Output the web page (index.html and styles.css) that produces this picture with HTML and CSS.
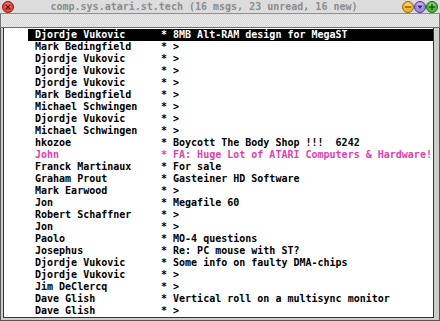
FILE: index.html
```html
<!DOCTYPE html>
<html lang="en">
<head>
    <meta charset="UTF-8">
    <title>comp.sys.atari.st.tech</title>
    <link rel="stylesheet" href="styles.css">
</head>
<body>
    <div class="window">
        <div class="titlebar">
            <svg class="btn close" width="12" height="12" viewBox="0 0 12 12">
                <circle cx="6" cy="6" r="5.5" fill="#e2463c" stroke="#8a1c14"/>
                <circle cx="6" cy="4.5" r="3" fill="#f49a8e" opacity="0.6"/>
                <path d="M3.8 3.8 L8.2 8.2 M8.2 3.8 L3.8 8.2" stroke="#6a1008" stroke-width="1.4"/>
            </svg>
            <div class="title">comp.sys.atari.st.tech (16 msgs, 23 unread, 16 new)</div>
            <div class="btns">
                <svg class="btn" width="12" height="12" viewBox="0 0 12 12">
                    <circle cx="6" cy="6" r="5.5" fill="#f0b72a" stroke="#9a6a08"/>
                    <circle cx="6" cy="4.5" r="3" fill="#fbe38a" opacity="0.6"/>
                    <path d="M3 6 H9" stroke="#7a4a00" stroke-width="1.4"/>
                </svg>
                <svg class="btn" width="12" height="12" viewBox="0 0 12 12">
                    <circle cx="6" cy="6" r="5.5" fill="#a58ae0" stroke="#4e3690"/>
                    <circle cx="6" cy="4.5" r="3" fill="#d8ccf6" opacity="0.6"/>
                    <path d="M3.2 4.6 H8.8 L6 8 Z" fill="#3c2474"/>
                </svg>
                <svg class="btn" width="12" height="12" viewBox="0 0 12 12">
                    <circle cx="6" cy="6" r="5.5" fill="#4cbc3a" stroke="#1e6a12"/>
                    <circle cx="6" cy="4.5" r="3" fill="#aee69a" opacity="0.6"/>
                    <path d="M3 6 H9 M6 3 V9" stroke="#15500a" stroke-width="1.4"/>
                </svg>
            </div>
        </div>
        <div class="infobar"></div>
        <div class="frame">
            <ul class="threads">
                <li class="sel"><div class="row"><span class="from">Djordje Vukovic</span><span>* 8MB Alt-RAM design for MegaST</span></div></li>
                <li><div class="row"><span class="from">Mark Bedingfield</span><span>* &gt;</span></div></li>
                <li><div class="row"><span class="from">Djordje Vukovic</span><span>* &gt;</span></div></li>
                <li><div class="row"><span class="from">Djordje Vukovic</span><span>* &gt;</span></div></li>
                <li><div class="row"><span class="from">Djordje Vukovic</span><span>* &gt;</span></div></li>
                <li><div class="row"><span class="from">Mark Bedingfield</span><span>* &gt;</span></div></li>
                <li><div class="row"><span class="from">Michael Schwingen</span><span>* &gt;</span></div></li>
                <li><div class="row"><span class="from">Djordje Vukovic</span><span>* &gt;</span></div></li>
                <li><div class="row"><span class="from">Michael Schwingen</span><span>* &gt;</span></div></li>
                <li><div class="row"><span class="from">hkozoe</span><span>* Boycott The Body Shop !!!  6242</span></div></li>
                <li class="hot"><div class="row"><span class="from">John</span><span>* FA: Huge Lot of ATARI Computers &amp; Hardware!</span></div></li>
                <li><div class="row"><span class="from">Franck Martinaux</span><span>* For sale</span></div></li>
                <li><div class="row"><span class="from">Graham Prout</span><span>* Gasteiner HD Software</span></div></li>
                <li><div class="row"><span class="from">Mark Earwood</span><span>* &gt;</span></div></li>
                <li><div class="row"><span class="from">Jon</span><span>* Megafile 60</span></div></li>
                <li><div class="row"><span class="from">Robert Schaffner</span><span>* &gt;</span></div></li>
                <li><div class="row"><span class="from">Jon</span><span>* &gt;</span></div></li>
                <li><div class="row"><span class="from">Paolo</span><span>* MO-4 questions</span></div></li>
                <li><div class="row"><span class="from">Josephus</span><span>* Re: PC mouse with ST?</span></div></li>
                <li><div class="row"><span class="from">Djordje Vukovic</span><span>* Some info on faulty DMA-chips</span></div></li>
                <li><div class="row"><span class="from">Djordje Vukovic</span><span>* &gt;</span></div></li>
                <li><div class="row"><span class="from">Jim DeClercq</span><span>* &gt;</span></div></li>
                <li><div class="row"><span class="from">Dave Glish</span><span>* Vertical roll on a multisync monitor</span></div></li>
                <li><div class="row"><span class="from">Dave Glish</span><span>* &gt;</span></div></li>
            </ul>
        </div>
    </div>
</body>
</html>
```

FILE: styles.css
```css
* {
    margin: 0;
    padding: 0;
    box-sizing: border-box;
}
body {
    width: 440px;
    height: 321px;
    overflow: hidden;
    background: #fff;
    font-family: 'DejaVu Sans Mono', 'Liberation Mono', monospace;
    font-size: 10px;
    font-weight: bold;
}
.window {
    width: 440px;
    height: 321px;
    display: flex;
    flex-direction: column;
    background: #c8c8c8;
}
.titlebar {
    height: 14px;
    display: flex;
    align-items: center;
    padding: 0 2px;
    background: #dcdcdc;
    border-bottom: 1px solid #8e8e8e;
}
.btn {
    display: block;
    flex: none;
}
.title {
    flex: 1;
    text-align: center;
    color: #8c8c8c;
    line-height: 13px;
    white-space: pre;
    padding-right: 8px;
}
.btns {
    display: flex;
}
.infobar {
    height: 14px;
    background: repeating-conic-gradient(#ececec 0 25%, #d6d6d6 0 50%) 0 0 / 2px 2px;
    border-left: 1px solid #777;
    border-right: 1px solid #777;
    border-bottom: 1px solid #6a6a6a;
}
.frame {
    flex: 1;
    display: flex;
    padding: 0 5px 2px 2px;
    background: #cdcdcd;
    border: 1px solid #555;
    border-top: 0;
}
.threads {
    flex: 1;
    list-style: none;
    background: #fff;
    padding-top: 1px;
    border: 1px solid #333;
    border-top: 0;
}
.threads li {
    height: 12px;
    padding-left: 24px;
}
.row {
    display: flex;
    height: 12px;
    line-height: 12px;
    padding-left: 7px;
    color: #000;
    white-space: pre;
}
.from {
    width: 126px;
    flex: none;
}
.sel .row {
    background: #000;
    color: #fff;
}
.hot .row {
    color: #e23fae;
}
```
